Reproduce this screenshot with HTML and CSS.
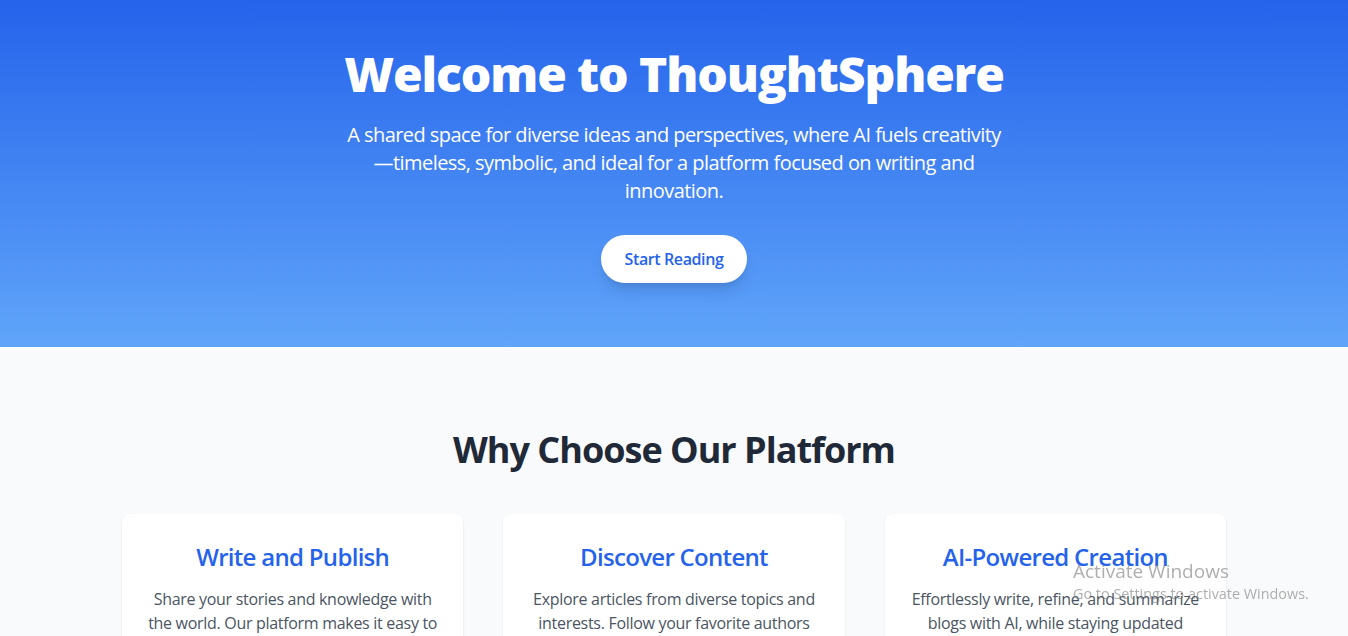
FILE: index.html
```html
<!DOCTYPE html>
<html lang="en">
<head>
<meta charset="utf-8">
<title>ThoughtSphere</title>
<link rel="stylesheet" href="styles.css">
</head>
<body>
<header class="hero">
  <h1 class="hero-title">Welcome to ThoughtSphere</h1>
  <p class="hero-sub">A shared space for diverse ideas and perspectives, where AI fuels creativity<br>—timeless, symbolic, and ideal for a platform focused on writing and<br>innovation.</p>
  <a class="hero-btn" href="#">Start Reading</a>
</header>
<section class="features">
  <h2 class="features-title">Why Choose Our Platform</h2>
  <div class="cards">
    <div class="card">
      <h3 class="card-title">Write and Publish</h3>
      <p class="card-text">Share your stories and knowledge with the world. Our platform makes it easy to create, format, and publish your articles.</p>
    </div>
    <div class="card">
      <h3 class="card-title">Discover Content</h3>
      <p class="card-text">Explore articles from diverse topics and interests. Follow your favorite authors and never miss a new post.</p>
    </div>
    <div class="card">
      <h3 class="card-title">AI-Powered Creation</h3>
      <p class="card-text">Effortlessly write, refine, and summarize blogs with AI, while staying updated through curated insights.</p>
    </div>
  </div>
</section>
<div class="activate">
  <div class="activate-title">Activate Windows</div>
  <div class="activate-sub">Go to Settings to activate Windows.</div>
</div>
</body>
</html>
```

FILE: styles.css
```css
* { box-sizing: border-box; }
html, body { margin: 0; padding: 0; }
body {
  font-family: "Open Sans", "Noto Sans", sans-serif;
  background: #f9fafb;
  color: #1f2937;
}
.hero {
  background: linear-gradient(180deg, #2563eb 0%, #60a5fa 100%);
  color: #fff;
  text-align: center;
  padding: 44px 16px 64px;
  display: flex;
  flex-direction: column;
  align-items: center;
}
.hero-title {
  margin: 0;
  font-size: 48px;
  line-height: 60px;
  font-weight: 800;
  letter-spacing: -1.1px;
}
.hero-sub {
  margin: 17px 0 0;
  max-width: 700px;
  font-size: 20px;
  line-height: 28px;
  letter-spacing: -0.55px;
  white-space: nowrap;
}
.hero-btn {
  margin-top: 30px;
  display: inline-block;
  background: #fff;
  color: #2563eb;
  font-weight: 600;
  font-size: 16px;
  line-height: 24px;
  padding: 12px 24px;
  border-radius: 9999px;
  letter-spacing: -0.4px;
  text-decoration: none;
  box-shadow: 0 10px 15px -3px rgba(0,0,0,0.12), 0 4px 6px -4px rgba(0,0,0,0.1);
}
.features {
  padding: 83px 24px 80px;
}
.features-title {
  margin: 0 0 44px;
  text-align: center;
  font-size: 36px;
  line-height: 40px;
  font-weight: 700;
  letter-spacing: -1px;
  color: #1f2937;
}
.cards {
  max-width: 1104px;
  margin: 0 auto;
  display: grid;
  grid-template-columns: repeat(3, 1fr);
  gap: 40px;
}
.card {
  background: #fff;
  border-radius: 8px;
  padding: 27px 24px 24px;
  text-align: center;
  box-shadow: 0 1px 3px rgba(0,0,0,0.06), 0 1px 2px rgba(0,0,0,0.04);
}
.card-title {
  margin: 0 0 14px;
  font-size: 24px;
  line-height: 32px;
  font-weight: 600;
  letter-spacing: -0.7px;
  color: #2563eb;
}
.card-text {
  margin: 0;
  font-size: 16px;
  line-height: 24px;
  letter-spacing: -0.3px;
  color: #4b5563;
}
.activate {
  position: fixed;
  left: 1073px;
  top: 559px;
  color: rgba(120,120,120,0.6);
  pointer-events: none;
}
.activate-title {
  font-size: 19px;
  line-height: 25px;
}
.activate-sub {
  font-size: 14.4px;
  line-height: 20px;
}
```
